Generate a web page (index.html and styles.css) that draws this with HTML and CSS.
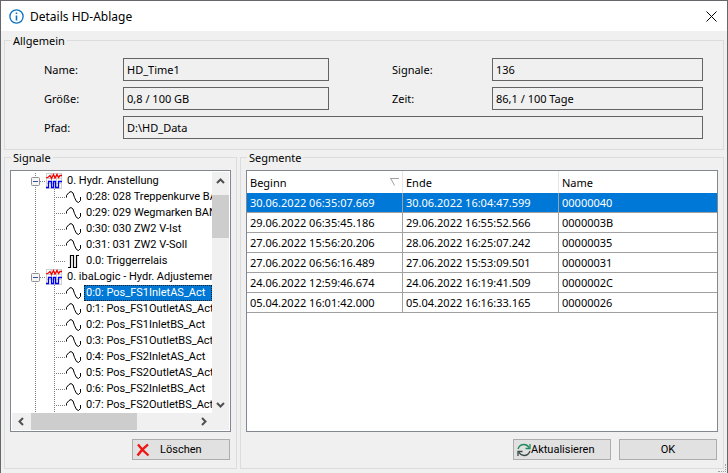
FILE: index.html
```html
<!DOCTYPE html>
<html lang="de">
<head>
  <meta charset="UTF-8" />
  <meta name="viewport" content="width=device-width, initial-scale=1.0"/>
  <title>Details HD-Ablage</title>
  <link rel="stylesheet" href="styles.css">
</head>
<body>
  <svg class="defs" aria-hidden="true">
    <symbol id="group" viewBox="0 0 53 16">
      <path class="dots" d="M23.5 0V3M23.5 14V16M28 8.5H34"/>
      <rect x="19.5" y="4.5" width="8" height="8" rx="1" fill="#f6f6f6" stroke="#919191"/>
      <path d="M21 8.5H26" stroke="#3c4d9e"/>
      <path d="M34 .5H50M34 5.5H50M34 10.5H50M34 15.5H50M34.5 0V16M39.5 0V16M44.5 0V16M49.5 0V16" stroke="#d0d0d0"/>
      <path d="M34 5L36.5 4L38 2.5L39.5 5.5L41.5 1.5L43 5L45 1.500L46.500 4.500L48 2.500L50 2.500" fill="none" stroke="#f00000" stroke-width="1.300"/>
      <path d="M34 14.5H36.5V8.5H39.5V14.5H41.5V8.5H43.5V14.5H46.5V8.5H50" fill="none" stroke="#0000f0" stroke-width="1.300"/>
    </symbol>
    <symbol id="lines" viewBox="0 0 72 16">
      <path class="dots" d="M42.5 0V16M44 8.5H53"/>
    </symbol>
    <symbol id="lines-root" viewBox="0 0 72 16">
      <path class="dots" d="M23.5 0V16"/>
    </symbol>
    <symbol id="lines-last" viewBox="0 0 72 16">
      <path class="dots" d="M42.5 0V9M44 8.5H53"/>
    </symbol>
    <symbol id="sine" viewBox="0 0 72 16">
      <path d="M54.5 8.5V6.5L57 3.5L59 2.5L61 4L62.5 8.500L64.500 12.500L66.500 13.500L68.500 11.500V8" fill="none" stroke="#000"/>
    </symbol>
    <symbol id="pulse" viewBox="0 0 72 16">
      <path d="M56 14.5H58.5V2.5H61.5V14.5H64.5V2.5H67" fill="none" stroke="#000" stroke-width="1.200"/>
    </symbol>
  </svg>

  <div class="window">
    <header class="titlebar">
      <svg width="15" height="15" viewBox="0 0 15 15" aria-hidden="true">
        <circle cx="7.5" cy="7.5" r="6.6" fill="none" stroke="#0a70c4" stroke-width="1.3"/>
        <path d="M7.5 6.5V11.5M7.5 3.5V5" stroke="#0a70c4" stroke-width="1.6"/>
      </svg>
      <h1>Details HD-Ablage</h1>
      <button class="close" aria-label="Schließen">
        <svg width="11" height="11" viewBox="0 0 11 11"><path d="M.5 .5L10.5 10.5M10.5 .5L.5 10.5" stroke="#000"/></svg>
      </button>
    </header>

    <main>
      <fieldset class="general">
        <legend>Allgemein</legend>
        <label for="name">Name:</label>
        <input id="name" value="HD_Time1" readonly>
        <label for="signals" class="second">Signale:</label>
        <input id="signals" value="136" readonly>
        <label for="size">Größe:</label>
        <input id="size" value="0,8 / 100 GB" readonly>
        <label for="time" class="second">Zeit:</label>
        <input id="time" value="86,1 / 100 Tage" readonly>
        <label for="path">Pfad:</label>
        <input id="path" class="wide" value="D:\HD_Data" readonly>
      </fieldset>

      <div class="panels">
        <fieldset class="panel">
          <legend>Signale</legend>
          <div class="tree">
            <ul id="tree"></ul>
            <div class="vscroll">
              <button aria-label="Nach oben"><svg width="9" height="6" viewBox="0 0 9 6"><path d="M1 5L4.5 1.5L8 5"/></svg></button>
              <div class="thumb"></div>
              <button aria-label="Nach unten"><svg width="9" height="6" viewBox="0 0 9 6"><path d="M1 1L4.5 4.5L8 1"/></svg></button>
            </div>
            <div class="hscroll">
              <button aria-label="Nach links"><svg width="6" height="9" viewBox="0 0 6 9"><path d="M5 1L1.5 4.5L5 8"/></svg></button>
              <div class="thumb"></div>
              <button aria-label="Nach rechts"><svg width="6" height="9" viewBox="0 0 6 9"><path d="M1 1L4.5 4.5L1 8"/></svg></button>
            </div>
          </div>
          <div class="actions">
            <button class="btn delete">
              <svg width="14" height="14" viewBox="0 0 14 14"><path d="M2 1.5Q6 7 12.5 12.5M12 1.5Q6 6 1.5 12.5" fill="none" stroke="#f01414" stroke-width="2.2"/></svg>
              <span>Löschen</span>
            </button>
          </div>
        </fieldset>

        <fieldset class="panel">
          <legend>Segmente</legend>
          <div class="grid">
            <table>
              <colgroup><col class="date"><col class="date"><col></colgroup>
              <thead>
                <tr>
                  <th><div class="sorted">Beginn
                    <svg width="9" height="8" viewBox="0 0 9 8"><path d="M0 .5H9M1 1L4.5 7.5" fill="none" stroke="#a0a0a0"/></svg>
                  </div></th>
                  <th>Ende</th>
                  <th>Name</th>
                </tr>
              </thead>
              <tbody>
                <tr class="selected"><td>30.06.2022 06:35:07.669</td><td>30.06.2022 16:04:47.599</td><td>00000040</td></tr>
                <tr><td>29.06.2022 06:35:45.186</td><td>29.06.2022 16:55:52.566</td><td>0000003B</td></tr>
                <tr><td>27.06.2022 15:56:20.206</td><td>28.06.2022 16:25:07.242</td><td>00000035</td></tr>
                <tr><td>27.06.2022 06:56:16.489</td><td>27.06.2022 15:53:09.501</td><td>00000031</td></tr>
                <tr><td>24.06.2022 12:59:46.674</td><td>24.06.2022 16:19:41.509</td><td>0000002C</td></tr>
                <tr><td>05.04.2022 16:01:42.000</td><td>05.04.2022 16:16:33.165</td><td>00000026</td></tr>
              </tbody>
            </table>
          </div>
          <div class="actions">
            <button class="btn refresh">
              <svg width="14" height="14" viewBox="0 0 14 14" fill="none" stroke-width="1.3">
                <path d="M1 6Q2.5 1.5 7 1.5Q10 1.5 12 4.5M13 1V5.5H8.5" stroke="#1f8a5c"/>
                <path d="M13 8Q11.5 12.5 7 12.5Q4 12.5 2 9.5M1 13V8.5H5.5" stroke="#3a4a46"/>
              </svg>
              <span>Aktualisieren</span>
            </button>
            <button class="btn">OK</button>
          </div>
        </fieldset>
      </div>
    </main>
    <div class="grip"></div>
  </div>

  <script>
    const nodes = [
      { text: "0. Hydr. Anstellung", group: true },
      { text: "0:28: 028 Treppenkurve BA" },
      { text: "0:29: 029 Wegmarken BAN" },
      { text: "0:30: 030 ZW2 V-Ist" },
      { text: "0:31: 031 ZW2 V-Soll" },
      { text: "0.0: Triggerrelais", icon: "pulse", last: true },
      { text: "0. ibaLogic - Hydr. Adjustement", group: true },
      { text: "0:0: Pos_FS1InletAS_Act", selected: true },
      { text: "0:1: Pos_FS1OutletAS_Act" },
      { text: "0:2: Pos_FS1InletBS_Act" },
      { text: "0:3: Pos_FS1OutletBS_Act" },
      { text: "0:4: Pos_FS2InletAS_Act" },
      { text: "0:5: Pos_FS2OutletAS_Act" },
      { text: "0:6: Pos_FS2InletBS_Act" },
      { text: "0:7: Pos_FS2OutletBS_Act" }
    ];

    const tree = document.getElementById("tree");

    nodes.forEach(node => {
      const item = document.createElement("li");
      const icon = node.icon || "sine";
      const lines = node.last ? "lines-last" : "lines";

      item.innerHTML = node.group
        ? `<svg width="53" height="16"><use href="#group"/></svg>`
        : `<svg width="72" height="16"><use href="#lines-root"/><use href="#${lines}"/><use href="#${icon}"/></svg>`;

      const label = document.createElement("span");
      label.textContent = node.text;
      if (node.selected) label.className = "selected";
      item.appendChild(label);
      tree.appendChild(item);
    });
  </script>
</body>
</html>
```
FILE: styles.css
```css
:root {
  --face: #f0f0f0;
  --line: #dcdcdc;
  --box: #828790;
  --accent: #0078d7;
  --ui: "Noto Sans", sans-serif;
  --sans: Roboto, "Liberation Sans", sans-serif;
}

* {
  box-sizing: border-box;
}

body {
  margin: 0;
  font-family: var(--ui);
  font-size: 11px;
  color: #000;
}

.defs {
  position: absolute;
  width: 0;
  height: 0;
}

.dots {
  fill: none;
  stroke: #808080;
  stroke-dasharray: 1 1;
}

.window {
  position: relative;
  display: flex;
  flex-direction: column;
  min-height: 100vh;
  background: var(--face);
  border: 1px solid #66676b;
}

.titlebar {
  display: flex;
  align-items: center;
  gap: 6px;
  height: 30px;
  padding: 0 10px 0 8px;
  background: #fff;
}

.titlebar h1 {
  flex: 1;
  margin: 0;
  font-size: 12px;
  font-weight: normal;
}

.close {
  display: flex;
  padding: 0;
  border: none;
  background: none;
}

main {
  flex: 1;
  display: flex;
  flex-direction: column;
  padding: 2px 3px 4px;
}

fieldset {
  min-width: 0;
  margin: 0;
  border: 1px solid var(--line);
}

legend {
  margin-left: 1px;
  padding: 0 2px;
  line-height: 15px;
}

.general {
  display: grid;
  grid-template-columns: 79px 206px 163px 1fr;
  row-gap: 6px;
  align-items: center;
  padding: 10px 20px 10px 39px;
}

.general legend {
  margin-left: -33px;
}

.general .second {
  padding-left: 63px;
}

.general input {
  width: 100%;
  height: 23px;
  padding: 0 3px;
  border: 1px solid #646464;
  border-radius: 0;
  background: var(--face);
  font: inherit;
  color: inherit;
}

.general .wide {
  grid-column: 2 / -1;
}

.panels {
  flex: 1;
  display: grid;
  grid-template-columns: 233px 1fr;
  gap: 3px;
}

.panel {
  display: flex;
  flex-direction: column;
  gap: 7px;
  padding: 5px 5px 8px;
}

.actions {
  display: flex;
  justify-content: flex-end;
  gap: 8px;
  padding-right: 1px;
}

.tree {
  flex: 1;
  display: grid;
  grid-template-columns: 1fr 17px;
  grid-template-rows: 1fr 17px;
  padding: 1px;
  background: #fff;
  border: 1px solid var(--box);
  font-family: var(--sans);
}

.tree ul {
  min-width: 0;
  margin: 0;
  padding: 1px 0 0;
  overflow: hidden;
  list-style: none;
}

.tree li {
  display: flex;
  align-items: center;
  height: 16px;
  white-space: nowrap;
}

.tree svg {
  flex: none;
}

.tree li span {
  flex: none;
  padding: 0 2px;
  line-height: 16px;
}

.tree li .selected {
  flex: 1 0 auto;
  background: var(--accent);
  color: #fff;
  outline: 1px dotted #1c1c1c;
  outline-offset: -1px;
}

.vscroll,
.hscroll {
  display: flex;
  background: var(--face);
}

.vscroll {
  flex-direction: column;
}

.hscroll {
  grid-column: 1 / -1;
}

.vscroll button,
.hscroll button {
  display: flex;
  align-items: center;
  justify-content: center;
  width: 17px;
  height: 17px;
  padding: 0;
  border: none;
  background: none;
}

.vscroll path,
.hscroll path {
  fill: none;
  stroke: #505050;
  stroke-width: 2;
}

.thumb {
  background: #cdcdcd;
}

.vscroll .thumb {
  height: 43px;
  margin: 6px 0 auto;
}

.hscroll .thumb {
  width: 106px;
  margin: 0 auto 0 2px;
}

.hscroll button:last-child {
  margin-right: 17px;
}

.btn {
  display: flex;
  align-items: center;
  justify-content: center;
  width: 98px;
  height: 21px;
  padding: 0 3px;
  border: 1px solid #adadad;
  background: #e1e1e1;
  font-family: var(--sans);
  font-size: 11px;
  color: #000;
}

.delete {
  justify-content: flex-start;
  gap: 10px;
}

.refresh {
  justify-content: flex-start;
}

.grid {
  flex: 1;
  background: #fff;
  border: 1px solid var(--box);
}

table {
  width: 100%;
  table-layout: fixed;
  border-spacing: 0;
}

.date {
  width: 156px;
}

th,
td {
  padding: 0 3px;
  border-right: 1px solid #a0a0a0;
  text-align: left;
  font-weight: normal;
  white-space: nowrap;
}

th {
  height: 22px;
  border-color: #e5e5e5;
}

td {
  height: 20px;
  border-bottom: 1px solid #a0a0a0;
  line-height: 15px;
}

th:last-child,
td:last-child {
  border-right: none;
}

.sorted {
  display: flex;
  align-items: center;
  justify-content: space-between;
}

tbody .selected {
  background: var(--accent);
  color: #fff;
}

/* resize handle over the window corner */
.grip {
  position: absolute;
  right: 1px;
  bottom: 1px;
  width: 8px;
  height: 8px;
  border-right: 1px dotted #a0a0a0;
  border-bottom: 1px dotted #a0a0a0;
}
```
